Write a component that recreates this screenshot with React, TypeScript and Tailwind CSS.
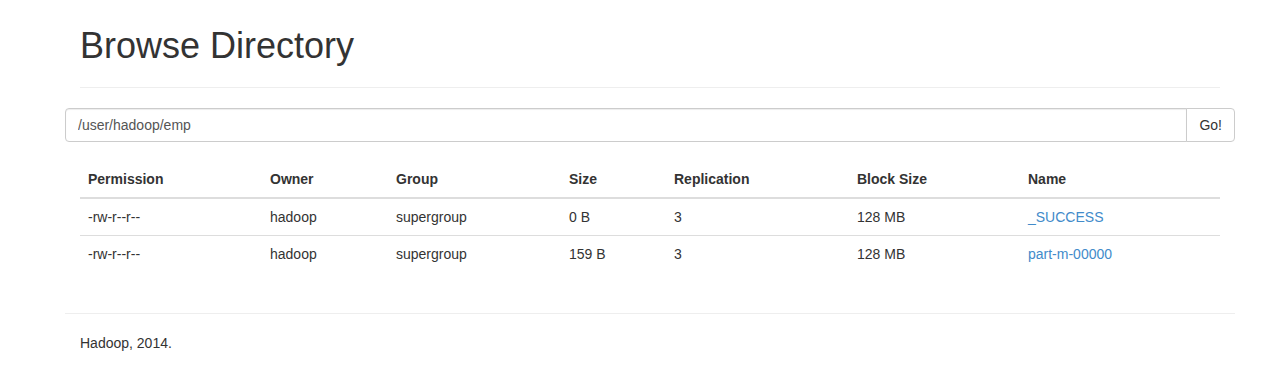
const rows = [
  { perm: '-rw-r--r--', owner: 'hadoop', group: 'supergroup', size: '0 B', repl: '3', block: '128 MB', name: '_SUCCESS' },
  { perm: '-rw-r--r--', owner: 'hadoop', group: 'supergroup', size: '159 B', repl: '3', block: '128 MB', name: 'part-m-00000' },
];

const cols = [
  { label: 'Permission', w: 'w-[182px]' },
  { label: 'Owner', w: 'w-[126px]' },
  { label: 'Group', w: 'w-[173px]' },
  { label: 'Size', w: 'w-[105px]' },
  { label: 'Replication', w: 'w-[183px]' },
  { label: 'Block Size', w: 'w-[171px]' },
  { label: 'Name', w: 'w-[200px]' },
];

export default function App() {
  return (
    <div className="min-h-[378px] bg-white text-[14px] leading-[20px] text-[#333] font-['Liberation_Sans',Arial,sans-serif]">
      <div className="ml-[65px] w-[1170px]">
        <div className="mx-[15px] border-b border-[#eee] pt-[26px] pb-[21px]">
          <h1 className="text-[36px] leading-[40px] font-normal">Browse Directory</h1>
        </div>

        <div className="mt-[20px] flex h-[34px]">
          <input
            readOnly
            value="/user/hadoop/emp"
            className="h-[34px] flex-1 rounded-l-[4px] border border-[#ccc] px-[12px] text-[14px] text-[#555] shadow-[inset_0_1px_1px_rgba(0,0,0,0.075)] outline-none"
          />
          <button className="-ml-px h-[34px] rounded-r-[4px] border border-[#ccc] bg-white px-[12px] text-[14px] text-[#333]">
            Go!
          </button>
        </div>

        <div className="mx-[15px] mt-[19px]">
          <table className="w-full table-fixed border-collapse">
            <thead>
              <tr>
                {cols.map((c) => (
                  <th key={c.label} className={`${c.w} border-b-2 border-[#ddd] p-[8px] text-left font-bold`}>
                    {c.label}
                  </th>
                ))}
              </tr>
            </thead>
            <tbody>
              {rows.map((r, i) => (
                <tr key={i}>
                  <td className="border-t border-[#ddd] p-[8px]">{r.perm}</td>
                  <td className="border-t border-[#ddd] p-[8px]">{r.owner}</td>
                  <td className="border-t border-[#ddd] p-[8px]">{r.group}</td>
                  <td className="border-t border-[#ddd] p-[8px]">{r.size}</td>
                  <td className="border-t border-[#ddd] p-[8px]">{r.repl}</td>
                  <td className="border-t border-[#ddd] p-[8px]">{r.block}</td>
                  <td className="border-t border-[#ddd] p-[8px]">
                    <a href="#" className="text-[#428bca]">{r.name}</a>
                  </td>
                </tr>
              ))}
            </tbody>
          </table>
        </div>

        <div className="mt-[41px] border-t border-[#eee] px-[15px] pt-[19px]">
          <p>Hadoop, 2014.</p>
        </div>
      </div>
    </div>
  );
}
